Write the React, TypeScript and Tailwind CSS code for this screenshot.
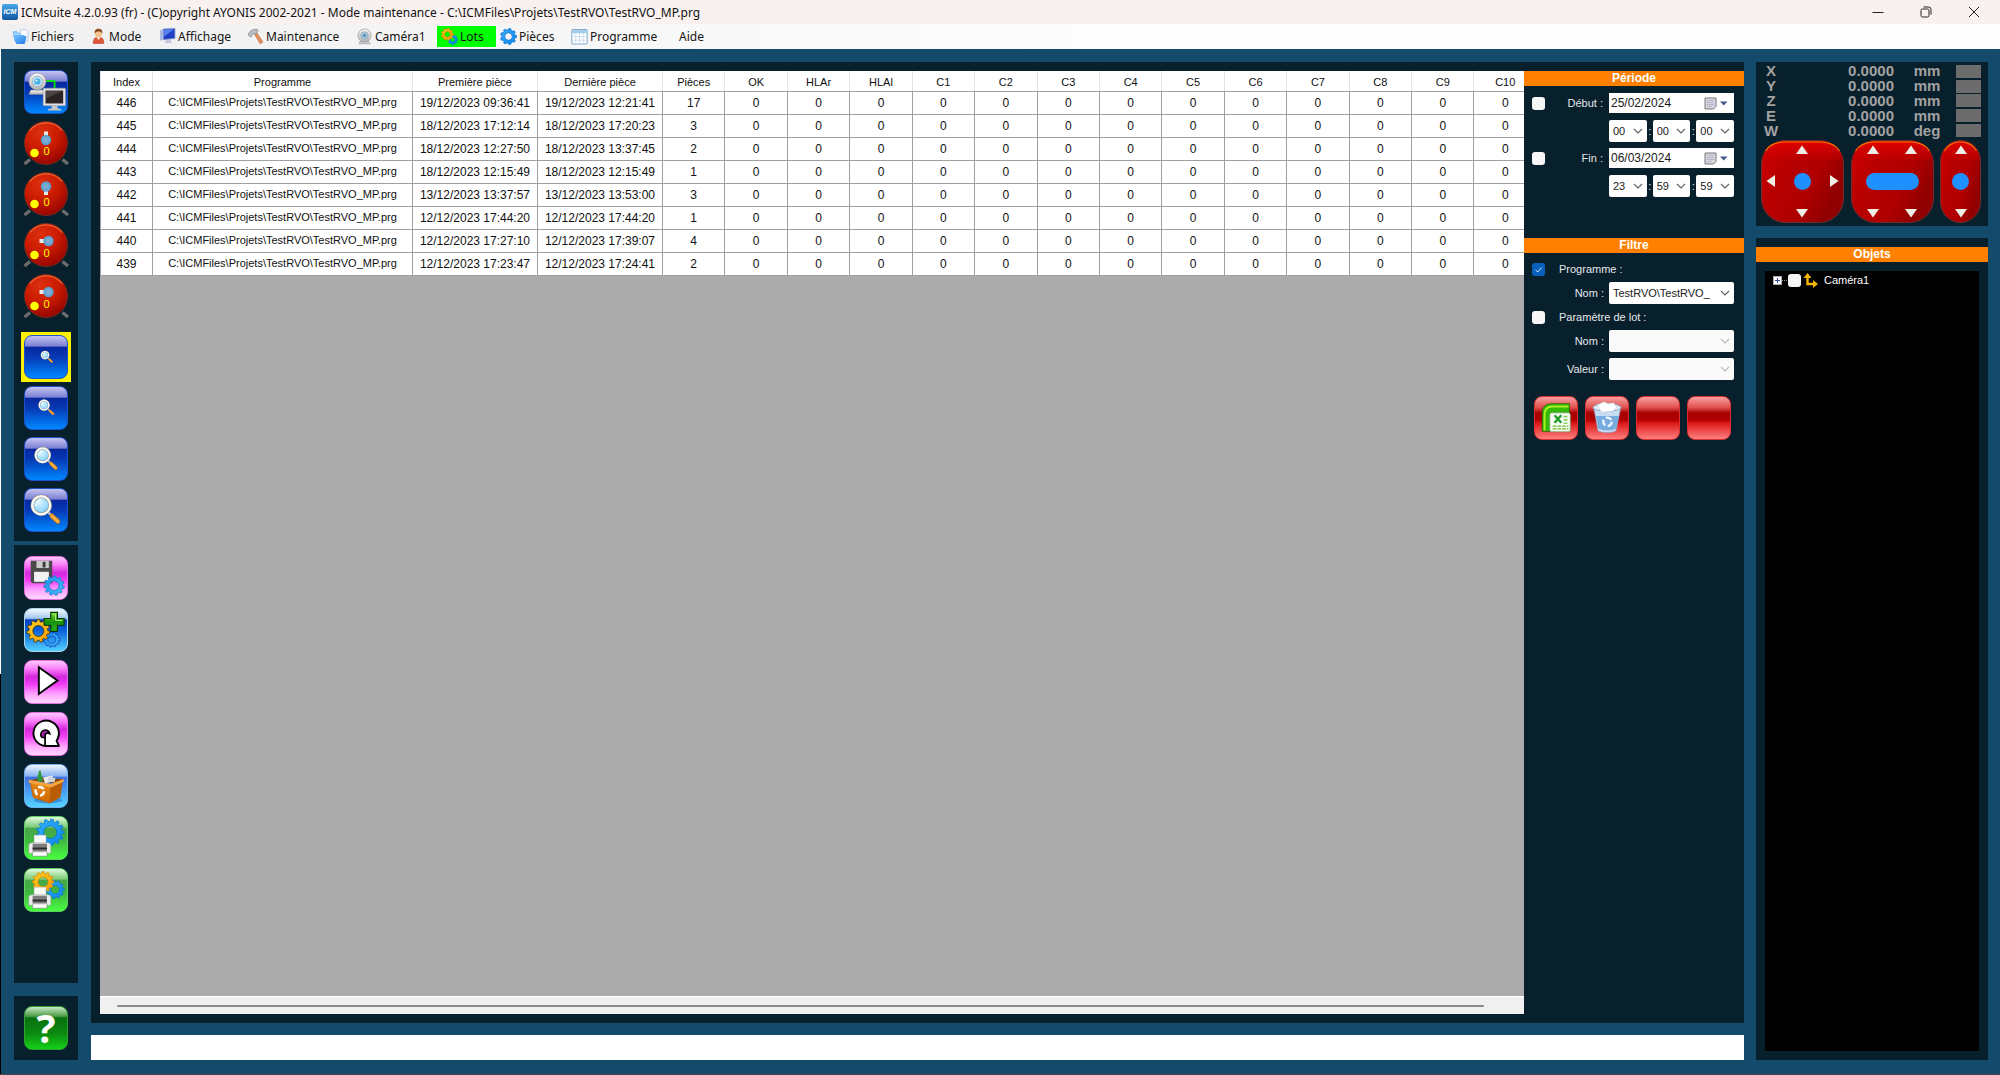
import React from "react";

const UI = "font-['Liberation_Sans',Arial,sans-serif]";

/* ---------- drawing helpers ---------- */

function gearPath(cx: number, cy: number, ro: number, ri: number, hole: number, n: number, squash = 1, rot = 0) {
  const pts: string[] = [];
  const step = (Math.PI * 2) / n;
  const at = (r: number, a: number) =>
    `${(cx + r * Math.cos(a)).toFixed(2)} ${(cy + r * squash * Math.sin(a)).toFixed(2)}`;
  for (let i = 0; i < n; i++) {
    const a = i * step + rot;
    pts.push(at(ri, a - step * 0.3), at(ro, a - step * 0.2), at(ro, a + step * 0.2), at(ri, a + step * 0.3));
  }
  const h = hole * squash;
  return `M${pts.join("L")}ZM${cx - hole} ${cy}a${hole} ${h} 0 1 0 ${hole * 2} 0a${hole} ${h} 0 1 0 ${-hole * 2} 0Z`;
}

function Gear(p: { cx: number; cy: number; r: number; color: "blue" | "gold" | "sky"; n?: number; squash?: number; rot?: number; outline?: string }) {
  const fills = { blue: "url(#gBlue)", gold: "url(#gGold)", sky: "url(#gSky)" };
  const lines = { blue: "#0a6fd0", gold: "#d88400", sky: "#1d78c0" };
  return (
    <path
      d={gearPath(p.cx, p.cy, p.r, p.r * 0.82, p.r * 0.48, p.n ?? 11, p.squash ?? 1, p.rot ?? 0)}
      fill={fills[p.color]}
      fillRule="evenodd"
      stroke={p.outline ?? lines[p.color]}
      strokeWidth="0.8"
      strokeLinejoin="round"
    />
  );
}

function Defs() {
  return (
    <svg width="0" height="0" className="absolute" aria-hidden="true">
      <defs>
        <linearGradient id="gBlue" x1="0" y1="0" x2="1" y2="1"><stop offset="0" stopColor="#35b4ff" /><stop offset="1" stopColor="#0a86f0" /></linearGradient>
        <linearGradient id="gSky" x1="0" y1="0" x2="1" y2="1"><stop offset="0" stopColor="#1894f0" /><stop offset="1" stopColor="#48baf8" /></linearGradient>
        <linearGradient id="gGold" x1="0" y1="0" x2="1" y2="1"><stop offset="0" stopColor="#ffd428" /><stop offset="1" stopColor="#ff9c00" /></linearGradient>
        <radialGradient id="gKnob" cx="0.38" cy="0.25" r="0.85"><stop offset="0" stopColor="#dc3010" /><stop offset="0.45" stopColor="#cc1c00" /><stop offset="1" stopColor="#8a0000" /></radialGradient>
        <radialGradient id="gLens" cx="0.4" cy="0.35" r="0.8"><stop offset="0" stopColor="#d8f4ff" /><stop offset="0.6" stopColor="#96d8fa" /><stop offset="1" stopColor="#62b8ee" /></radialGradient>
        <radialGradient id="gBall" cx="0.5" cy="0.5" r="0.5"><stop offset="0" stopColor="#88b4d8" /><stop offset="1" stopColor="#5a9aca" /></radialGradient>
        <linearGradient id="gPad" x1="0" y1="0" x2="1" y2="0.5"><stop offset="0" stopColor="#d00000" /><stop offset="0.35" stopColor="#b80000" /><stop offset="0.7" stopColor="#b00000" /><stop offset="1" stopColor="#900000" /></linearGradient>
        <linearGradient id="gPadTop" x1="0" y1="0" x2="0" y2="1"><stop offset="0" stopColor="#e40000" /><stop offset="1" stopColor="#c80000" stopOpacity="0.25" /></linearGradient>
        <linearGradient id="gGrey" x1="0" y1="0" x2="0" y2="1"><stop offset="0" stopColor="#f6f6f6" /><stop offset="1" stopColor="#b4b4b4" /></linearGradient>
        <linearGradient id="gPlus" x1="0" y1="0" x2="0" y2="1"><stop offset="0" stopColor="#7ee020" /><stop offset="0.5" stopColor="#169010" /><stop offset="1" stopColor="#2ab418" /></linearGradient>
        <linearGradient id="gBox" x1="0" y1="0" x2="0" y2="1"><stop offset="0" stopColor="#e88a18" /><stop offset="1" stopColor="#cf6800" /></linearGradient>
        <linearGradient id="gFolder" x1="0" y1="0" x2="1" y2="1"><stop offset="0" stopColor="#7cc4ff" /><stop offset="1" stopColor="#1f7be8" /></linearGradient>
      </defs>
    </svg>
  );
}

/* ---------- menu icons (16 px) ---------- */

const small = { width: 17, height: 17, viewBox: "0 0 16 16", "aria-hidden": true } as const;

const FolderIcon = () => (
  <svg {...small}>
    <path d="M1 3.500h4l1 1.500h5v8H3z" fill="#9ad2ff" stroke="#58a8ec" strokeWidth="0.6" />
    <path d="M8 1.500h5l2 2v9H8z" fill="#f6faff" stroke="#9dbbdc" strokeWidth="0.6" />
    <path d="M0.800 6.500h9.500l3.400 1.500-1.800 7H4z" fill="url(#gFolder)" />
  </svg>
);
const UserIcon = () => (
  <svg {...small}>
    <path d="M3 14.500c0-4 1.500-6 5-6s5 2 5 6z" fill="#e2573a" stroke="#b03a20" strokeWidth="0.5" />
    <path d="M6 8.500l2 3 2-3z" fill="#fbe6c8" />
    <circle cx="8" cy="5" r="3.400" fill="#f3c48e" />
    <path d="M4.400 5.200C4 2 5.800.8 8 .8s4 1.200 3.600 4.400C10.800 3.800 9 3.400 8 3.400s-2.800.4-3.600 1.800z" fill="#8a4a20" />
  </svg>
);
const MonitorIcon = () => (
  <svg {...small}>
    <path d="M4 1l11-.5v9.300L4 11z" fill="#1c3fc4" stroke="#8494c8" strokeWidth="0.8" />
    <path d="M4.500 1.500l9.500-.4L5 8z" fill="#5a80f0" />
    <path d="M1 2l2.500-.8v10L1 12z" fill="#a8b4e0" />
    <path d="M7 11h4l1 3H5z" fill="#c2c8dc" />
  </svg>
);
const HammerIcon = () => (
  <svg {...small}>
    <path d="M6.500 5l2-1.500L15 13l-2.500 2z" fill="#e0905a" stroke="#b06030" strokeWidth="0.5" />
    <path d="M1 6.500C2 3 5 .8 9.500 1.200L10.500 3 7.800 6 6 5 3.600 8.800z" fill="#b9bcc2" stroke="#7c8088" strokeWidth="0.6" />
  </svg>
);
const WebcamIcon = () => (
  <svg {...small}>
    <path d="M4 12h8l1.500 3h-11z" fill="#c4c8cc" stroke="#999" strokeWidth="0.4" />
    <circle cx="8" cy="7" r="6.200" fill="url(#gGrey)" stroke="#9a9fa6" strokeWidth="0.7" />
    <circle cx="8" cy="7" r="3.500" fill="#a8c8dc" stroke="#8aa0b0" strokeWidth="0.6" />
    <circle cx="8" cy="7" r="1.500" fill="#4f8fb8" />
  </svg>
);
const LotsIcon = () => (
  <svg {...small}>
    <Gear cx={11} cy={11} r={4.600} color="blue" n={8} />
    <Gear cx={6} cy={6} r={5.600} color="gold" n={9} />
  </svg>
);
const PieceIcon = () => (
  <svg {...small}><Gear cx={8} cy={8} r={7.500} color="blue" n={9} /></svg>
);
const GridIcon = () => (
  <svg {...small}>
    <rect x="0.800" y="1.500" width="14.400" height="13.500" rx="1" fill="#fff" stroke="#86aacb" />
    <rect x="1.300" y="2" width="13.400" height="3" fill="#a4cdec" />
    <path d="M1 8h14M1 11.500h14M4.500 5v10M8 5v10M11.500 5v10" stroke="#c3dcf0" strokeWidth="0.8" />
  </svg>
);

/* ---------- toolbar icons (44 px) ---------- */

const big = { width: "100%", height: "100%", viewBox: "0 0 44 44", "aria-hidden": true } as const;

const CameraScreen = () => (
  <svg {...big}>
    <path d="M22 10.500h9V20" fill="none" stroke="#00e800" strokeWidth="1.800" />
    <path d="M6 20h13l3 4.500H4z" fill="url(#gGrey)" stroke="#888" strokeWidth="0.500" />
    <circle cx="13" cy="11" r="9" fill="url(#gGrey)" stroke="#8c9096" strokeWidth="0.600" />
    <circle cx="13" cy="11" r="5.400" fill="#cfe6f4" stroke="#8fb0c4" />
    <circle cx="13" cy="11" r="3.400" fill="#4ab0e8" />
    <circle cx="12" cy="10" r="1.200" fill="#d8f4ff" />
    <rect x="19" y="18" width="23.500" height="18.500" rx="1" fill="#e2e2e2" stroke="#909090" strokeWidth="0.500" />
    <rect x="21.500" y="20.500" width="18.500" height="13.500" fill="#2c2424" />
    <path d="M21.500 20.500H40L21.500 29z" fill="#6a6464" opacity="0.500" />
    <path d="M28 36.500h6v2.500l4 1v1.500H24V40l4-1z" fill="#c8c8c8" />
  </svg>
);

function Knob({ dir }: { dir: "up" | "down" | "left" }) {
  const ball = { up: [22, 19], down: [22, 14.5], left: [24.5, 18] }[dir];
  return (
    <button aria-label={`Éclairage ${dir}`} className="h-11 w-11">
      <svg {...big} className="overflow-visible">
        <path d="M6 38.500L.5 43M38.500 38.500L44 43" stroke="#6c6c6c" strokeWidth="3.400" />
        <circle cx="22" cy="22" r="21.500" fill="url(#gKnob)" stroke="#7c3020" strokeWidth="0.800" />
        <path d="M6 9.500A20.500 20.500 0 0 1 38 9.500" fill="none" stroke="#f06030" strokeWidth="1.200" />
        <circle cx="10.500" cy="32" r="4.300" fill="#ffff00" />
        {dir === "up" && <rect x="20" y="10.500" width="4" height="5" fill="#e8e8e8" />}
        {dir === "down" && <rect x="20" y="18.500" width="4" height="4.500" fill="#e8e8e8" />}
        {dir === "left" && <rect x="15.500" y="16" width="5" height="4" fill="#e8e8e8" />}
        <circle cx={ball[0]} cy={ball[1]} r="5.200" fill="url(#gBall)" />
        <text x="22.500" y="34" textAnchor="middle" fontSize="11" fill="#ffff00" fontFamily="Liberation Sans, sans-serif">0</text>
      </svg>
    </button>
  );
}

const Magnifier = ({ s, cx, cy }: { s: number; cx: number; cy: number }) => (
  <svg {...big}>
    <g transform={`translate(${cx} ${cy}) scale(${s})`}>
      <path d="M7.500 7.500l2.800 2.800" stroke="#c0c4c8" strokeWidth="2.600" />
      <path d="M11 11l6 5.600" stroke="#c06a10" strokeWidth="5" strokeLinecap="round" />
      <path d="M11 11l6 5.600" stroke="#ffb040" strokeWidth="3.400" strokeLinecap="round" />
      <circle r="9.200" fill="url(#gLens)" stroke="#86847c" strokeWidth="3.600" />
      <circle r="9.200" fill="none" stroke="#fbfaf4" strokeWidth="2.600" />
      <path d="M-5 1A5.500 5.500 0 0 1 0-5.500" stroke="#fff" strokeWidth="1.500" fill="none" opacity="0.800" />
    </g>
  </svg>
);

const SaveGear = () => (
  <svg {...big}>
    <path d="M6 4h22.500v23.500H8L6 25.500z" fill="#4a4a4a" />
    <path d="M12 4h13v7.500H12z" fill="#c9c9c9" /><path d="M18.500 5h3v6h-3z" fill="#3c3c3c" />
    <path d="M9.500 15.500h15.500v10.500H9.500z" fill="#f2f2f2" />
    <Gear cx={30.500} cy={30} r={10.800} color="sky" squash={0.950} rot={0.200} />
  </svg>
);
const AddGear = () => (
  <svg {...big}>
    <Gear cx={28} cy={32} r={8.800} color="sky" squash={0.900} outline="#1038c0" />
    <Gear cx={14} cy={23} r={12} color="gold" rot={0.150} outline="#3a2a00" />
    <path d="M27 3.500h7v6.500h7v7h-7v6.500h-7V17h-7v-7h7z" fill="url(#gPlus)" stroke="#043804" strokeWidth="1.200" />
    <path d="M29 5.500h3v6.500h7" fill="none" stroke="#b8f890" strokeWidth="0.900" />
  </svg>
);
const Play = () => (
  <svg {...big}><path d="M14.500 6.500l19.500 14-19.500 14z" fill="#fff" stroke="#000" strokeWidth="2" /></svg>
);
const Loop = () => (
  <svg {...big}>
    <path d="M21 34.500a13.300 13.300 0 1 1 12-5.500l2.500 5.500z" fill="#fff" stroke="#000" strokeWidth="2" strokeLinejoin="round" />
    <path d="M21 34V22.500" stroke="#000" strokeWidth="1.800" />
    <path d="M17.500 25.500a4.800 4.800 0 1 1 8.500-3.800c-1.800-1-4-.5-5 1.300v3z" fill="#9c20a4" stroke="#000" strokeWidth="1.600" />
  </svg>
);
const RecycleBox = () => (
  <svg {...big}>
    <ellipse cx="24" cy="37" rx="15" ry="3" fill="#1c5ab0" opacity="0.450" />
    <path d="M5 16l13-3 22 2-8 4z" fill="#8a4400" />
    <path d="M13 17c0-5 1-6 1.500-11h2c0 4 2 6 2 11z" fill="#2f9a3c" />
    <path d="M19 13l9-2 3 6-10 2z" fill="#f0f0f0" /><path d="M25 12l7 2-1 4-8-1z" fill="#cfd4d8" />
    <path d="M5 16l22 5-1 19L8.500 34z" fill="url(#gBox)" stroke="#a85400" strokeWidth="0.500" />
    <path d="M27 21l13-6-3 19-11 6z" fill="#b85c00" />
    <path d="M4 15.500l23 4.500 13.500-5.500v3L27 23.500 4 18.500z" fill="#f6a440" />
    <circle cx="15.500" cy="27.500" r="4.400" fill="none" stroke="#fff" strokeWidth="2.600" strokeDasharray="6.400 2.800" />
  </svg>
);
const Printer = () => (
  <g>
    <path d="M9.500 19h12.500v12H9.500z" fill="#fafafa" stroke="#b0b0b0" strokeWidth="0.500" />
    <path d="M4 30c0-2 1.500-3 4-3h15.500c2.500 0 3.500 1 3.500 3v8H4z" fill="#ececec" stroke="#999" strokeWidth="0.500" />
    <path d="M8 28h15v8H8z" fill="#7c7c7c" /><path d="M8 32h15v2H8z" fill="#2c2c2c" />
    <path d="M8 36.500h15V41H8z" fill="#fff" stroke="#777" strokeWidth="0.500" />
  </g>
);
const PrintGear = () => (
  <svg {...big}><Gear cx={26.500} cy={16} r={14.500} color="blue" n={13} squash={0.950} /><Printer /></svg>
);
const PrintGears = () => (
  <svg {...big}>
    <Gear cx={31.500} cy={21.500} r={9.500} color="blue" n={11} />
    <Gear cx={19} cy={13.500} r={11.200} color="gold" n={12} squash={0.950} />
    <Printer />
  </svg>
);
const ExcelExport = () => (
  <svg {...big}>
    <path d="M7.500 36V17c0-7 4-10 10-10H36v13L20 36z" fill="#35b808" stroke="#186000" strokeWidth="0.700" />
    <path d="M10 35V19c0-6 3-9 8-9h17" fill="none" stroke="#a8f020" strokeWidth="2" />
    <rect x="15.500" y="16.500" width="21.500" height="20" rx="2" fill="#f8fbf4" stroke="#6ca060" strokeWidth="0.800" />
    <path d="M20.500 19l7 8M27.500 19l-7 8" stroke="#1c9c24" strokeWidth="2.400" />
    <path d="M30 20.500h5M30 24h5M30 27.500h5M18.500 30.500h16.500M18.500 33.500h16.500" stroke="#8cd060" strokeWidth="1.800" strokeDasharray="4 1" />
  </svg>
);
const TrashDelete = () => (
  <svg {...big}>
    <path d="M8 11l4.500 24c2 3 17 3 19 0l5-24z" fill="#c6dcf0" stroke="#7ea2c8" strokeWidth="0.600" />
    <path d="M10.500 20h24L31.500 33c-3 2.500-15.500 2.500-18.500 0z" fill="#5c9cd8" opacity="0.750" />
    <ellipse cx="22" cy="11" rx="14.500" ry="4" fill="#e4edf6" stroke="#8aa8cc" />
    <path d="M12 8l7-3 4 2 6-1 3 5-4 4-12 1z" fill="#fff" stroke="#b8c4d0" strokeWidth="0.500" />
    <circle cx="22.500" cy="26" r="4.400" fill="none" stroke="#eef6ff" strokeWidth="2.500" strokeDasharray="6.400 2.800" />
  </svg>
);

/* ---------- controls ---------- */

const skins = {
  blue: "border-[#1e50c8] bg-[linear-gradient(180deg,#c4c4f2_0%,#7c80d4_24%,#0828a0_27%,#0638b4_50%,#0088ff_100%)]",
  pink: "border-[#e070e0] bg-[linear-gradient(180deg,#ffc8ff_0%,#f878f8_20%,#d428dc_38%,#f03cf4_55%,#ffa0ff_78%,#ffd8ff_100%)]",
  cyan: "border-[#b0d8f0] bg-[linear-gradient(180deg,#f4faff_0%,#a4c8f0_22%,#0840c0_26%,#0a60d8_50%,#50d0ff_100%)]",
  sky: "border-[#70b0f0] bg-[linear-gradient(180deg,#f0f6ff_0%,#88b4f0_26%,#3c70e0_30%,#4aa0f4_65%,#54d4ff_100%)]",
  green: "border-[#60d060] bg-[linear-gradient(180deg,#e0fadc_0%,#7ccc78_24%,#48a848_27%,#40b440_55%,#48ff40_100%)]",
  help: "border-[#30a030] bg-[linear-gradient(180deg,#c8e8c4_0%,#4c9c48_22%,#087010_26%,#0c8c10_65%,#14d018_100%)]",
  red: "border-[#d83030] bg-[linear-gradient(180deg,#f8a0a0_0%,#e05050_25%,#a80000_38%,#b00000_55%,#dc1818_62%,#ff8080_100%)]",
};

function Glossy({ skin, label, children }: { skin: keyof typeof skins; label: string; children?: React.ReactNode }) {
  return (
    <button aria-label={label} title={label} className={`flex h-11 w-11 shrink-0 items-center justify-center rounded-lg border ${skins[skin]}`}>
      {children}
    </button>
  );
}

function Combo({ label, value, options, disabled, id }: { label?: string; value: string; options?: string[]; disabled?: boolean; id?: string }) {
  return (
    <div className="relative min-w-0 flex-1">
      <select
        id={id}
        aria-label={label}
        defaultValue={value}
        disabled={disabled}
        className="block h-[22px] w-full appearance-none rounded-xs bg-white pr-4 pl-1 text-[11px] text-[#202020] disabled:bg-[#fafafa] disabled:opacity-100"
      >
        {(options ?? [value]).map((o) => <option key={o}>{o}</option>)}
      </select>
      <svg viewBox="0 0 10 6" className={`pointer-events-none absolute top-2 right-1 h-1.5 w-2.5 ${disabled ? "text-[#b8b8b8]" : "text-[#606060]"}`} aria-hidden="true">
        <path d="M1 1l4 4 4-4" fill="none" stroke="currentColor" strokeWidth="1.100" />
      </svg>
    </div>
  );
}

function Tick({ id, checked, label }: { id: string; checked?: boolean; label?: string }) {
  return (
    <span className="relative block h-[13px] w-[13px] shrink-0">
      <input id={id} type="checkbox" aria-label={label} defaultChecked={checked}
        className="peer block h-[13px] w-[13px] appearance-none rounded-[3px] bg-[#f6f6f6] checked:bg-[#0860bc]" />
      <svg viewBox="0 0 13 13" className="pointer-events-none absolute inset-0 hidden peer-checked:block" aria-hidden="true">
        <path d="M3.500 6.800l2.200 2.200 4-4.500" fill="none" stroke="#d8e8f8" strokeWidth="1" />
      </svg>
    </span>
  );
}

function DateBlock({ id, label, date, time }: { id: string; label: string; date: string; time: string[] }) {
  return (
    <div className="flex flex-col gap-[7px]">
      <div className="flex items-center">
        <Tick id={`${id}-on`} label={`Activer ${label}`} />
        <label htmlFor={id} className="w-[64px] pr-1.5 text-right">{label} :</label>
        <div className="flex h-5 flex-1 items-center bg-white pr-1.5">
          <input id={id} defaultValue={date} className="w-0 flex-1 bg-transparent pl-0.5 text-xs text-[#181818] outline-none" />
          <button aria-label={`Calendrier ${label}`} className="flex items-center gap-0.5">
            <svg width="13" height="13" viewBox="0 0 13 13" aria-hidden="true">
              <path d="M1 1h11v8.500L9.500 12H1z" fill="#d6d6e2" stroke="#7c7474" />
              <path d="M3 3.500h7M3 5.500h7M3 7.500h7M3 9.500h5" stroke="#a0a0b8" strokeWidth="0.800" strokeDasharray="1.500 0.600" />
            </svg>
            <svg width="9" height="5" viewBox="0 0 9 5" aria-hidden="true"><path d="M1 .5h7.500L4.700 4.500z" fill="#44588c" /></svg>
          </button>
        </div>
      </div>
      <div className="ml-[77px] flex items-center">
        {time.map((t, i) => (
          <React.Fragment key={i}>
            {i > 0 && <span className="w-1.5 text-center">:</span>}
            <Combo label={`${label} ${["heures", "minutes", "secondes"][i]}`} value={t} />
          </React.Fragment>
        ))}
      </div>
    </div>
  );
}

function Banner({ children }: { children: React.ReactNode }) {
  return <h2 className="bg-[#ff8000] text-center text-xs leading-[15px] font-bold text-white">{children}</h2>;
}

/* ---------- data ---------- */

const menus: [string, React.ReactNode, string][] = [
  ["Fichiers", <FolderIcon />, "w-[78px]"],
  ["Mode", <UserIcon />, "w-[69px]"],
  ["Affichage", <MonitorIcon />, "w-[88px]"],
  ["Maintenance", <HammerIcon />, "w-[109px]"],
  ["Caméra1", <WebcamIcon />, "w-[85px]"],
  ["Lots", <LotsIcon />, "w-[59px] bg-[#00ff00]"],
  ["Pièces", <PieceIcon />, "w-[71px]"],
  ["Programme", <GridIcon />, "w-[108px]"],
  ["Aide", null, "w-[40px]"],
];

const counters = ["OK", "HLAr", "HLAl", "C1", "C2", "C3", "C4", "C5", "C6", "C7", "C8", "C9", "C10"];
const program = "C:\\ICMFiles\\Projets\\TestRVO\\TestRVO_MP.prg";
const lots = [
  [446, "19/12/2023 09:36:41", "19/12/2023 12:21:41", 17],
  [445, "18/12/2023 17:12:14", "18/12/2023 17:20:23", 3],
  [444, "18/12/2023 12:27:50", "18/12/2023 13:37:45", 2],
  [443, "18/12/2023 12:15:49", "18/12/2023 12:15:49", 1],
  [442, "13/12/2023 13:37:57", "13/12/2023 13:53:00", 3],
  [441, "12/12/2023 17:44:20", "12/12/2023 17:44:20", 1],
  [440, "12/12/2023 17:27:10", "12/12/2023 17:39:07", 4],
  [439, "12/12/2023 17:23:47", "12/12/2023 17:24:41", 2],
];
const axes = [["X", "mm"], ["Y", "mm"], ["Z", "mm"], ["E", "mm"], ["W", "deg"]];

/* ---------- regions ---------- */

function TitleBar() {
  return (
    <header className="flex h-6 shrink-0 items-center bg-[#f9f1f0] pl-0.5 text-[#111]">
      <span className="flex h-4 w-4 items-center justify-center rounded-xs bg-linear-to-b from-[#4aa8e8] to-[#1058a0] text-[7px] font-bold text-white italic">ICM</span>
      <h1 className="ml-[3px] flex-1 truncate pt-0.5 font-['Noto_Sans','Open_Sans',sans-serif] text-xs">
        ICMsuite 4.2.0.93 (fr) - (C)opyright AYONIS 2002-2021 - Mode maintenance - C:\ICMFiles\Projets\TestRVO\TestRVO_MP.prg
      </h1>
      <div className="flex items-center pr-0.5">
        <button aria-label="Réduire" className="flex w-12 justify-center"><svg width="12" height="12" viewBox="0 0 12 12"><path d="M.5 6.500h11" stroke="#222" /></svg></button>
        <button aria-label="Restaurer" className="flex w-12 justify-center"><svg width="12" height="12" viewBox="0 0 12 12" fill="none" stroke="#222"><rect x="1" y="3" width="8" height="8" rx="1.500" /><path d="M3.500 1h5A2.500 2.500 0 0 1 11 3.500v5" /></svg></button>
        <button aria-label="Fermer" className="flex w-12 justify-center"><svg width="12" height="12" viewBox="0 0 12 12"><path d="M1 1l10 10M11 1L1 11" stroke="#222" /></svg></button>
      </div>
    </header>
  );
}

function MenuBar() {
  return (
    <nav className="flex h-[25px] shrink-0 items-center bg-linear-to-r from-[#f0f0f0] to-[#fdfdfd] to-55% pl-2">
      {menus.map(([name, icon, cls]) => (
        <button key={name} className={`flex h-[21px] shrink-0 items-center gap-0.5 pl-1 font-['Noto_Sans','Open_Sans',sans-serif] text-xs text-[#151515] ${cls}`}>
          {icon}
          {name}
        </button>
      ))}
    </nav>
  );
}

function ToolColumn() {
  return (
    <aside className="flex w-16 shrink-0 flex-col">
      <div className="flex flex-col items-center gap-[7px] bg-[#08202c] pt-2 pb-[9px]">
        <Glossy skin="blue" label="Vue caméra"><CameraScreen /></Glossy>
        <Knob dir="up" />
        <Knob dir="down" />
        <Knob dir="left" />
        <Knob dir="left" />
        <div className="mt-[7px] -mb-[3px] flex bg-[#fff200] p-[3px]"><Glossy skin="blue" label="Zoom 1"><Magnifier s={0.420} cx={21} cy={20} /></Glossy></div>
        <Glossy skin="blue" label="Zoom 2"><Magnifier s={0.550} cx={20} cy={19} /></Glossy>
        <Glossy skin="blue" label="Zoom 3"><Magnifier s={0.800} cx={18.500} cy={18} /></Glossy>
        <Glossy skin="blue" label="Zoom 4"><Magnifier s={1.020} cx={17} cy={17} /></Glossy>
      </div>
      <div className="mt-1 flex flex-1 flex-col items-center gap-2 bg-[#08202c] pt-[11px]">
        <Glossy skin="pink" label="Enregistrer"><SaveGear /></Glossy>
        <Glossy skin="cyan" label="Ajouter un lot"><AddGear /></Glossy>
        <Glossy skin="pink" label="Démarrer"><Play /></Glossy>
        <Glossy skin="pink" label="Boucle"><Loop /></Glossy>
        <Glossy skin="sky" label="Recycler"><RecycleBox /></Glossy>
        <Glossy skin="green" label="Imprimer la pièce"><PrintGear /></Glossy>
        <Glossy skin="green" label="Imprimer le lot"><PrintGears /></Glossy>
      </div>
      <div className="mt-[13px] flex h-16 items-center justify-center bg-[#08202c]">
        <Glossy skin="help" label="Aide">
          <span className="font-['Open_Sans','Noto_Sans',sans-serif] text-[40px] leading-none font-bold text-white">?</span>
        </Glossy>
      </div>
    </aside>
  );
}

function LotTable() {
  return (
    <div className="flex min-w-0 flex-1 flex-col bg-[#ababab]">
      <div className="flex-1 overflow-hidden">
        <table className="w-[1437px] table-fixed border-collapse bg-white text-center text-[#101010]">
          <colgroup>
            <col className="w-[52px]" /><col className="w-[260px]" /><col className="w-[125px]" /><col className="w-[125px]" />
          </colgroup>
          <thead>
            <tr className="h-5 text-[11px] [&>th]:border-x [&>th]:border-x-[#e4e4e4] [&>th]:border-b [&>th]:border-b-[#a0a0a0] [&>th]:px-0 [&>th]:pt-0.5 [&>th]:font-normal">
              <th>Index</th><th>Programme</th><th>Première pièce</th><th>Dernière pièce</th><th>Pièces</th>
              {counters.map((c) => <th key={c}>{c}</th>)}
            </tr>
          </thead>
          <tbody>
            {lots.map(([index, first, last, count]) => (
              <tr key={index} className="h-[23px] text-xs whitespace-nowrap [&>td]:border [&>td]:border-[#a0a0a0] [&>td]:p-0">
                <td>{index}</td><td className="text-[11px]">{program}</td><td>{first}</td><td>{last}</td><td>{count}</td>
                {counters.map((c) => <td key={c}>0</td>)}
              </tr>
            ))}
          </tbody>
        </table>
      </div>
      <div className="flex h-[18px] items-center border-t border-white bg-[#f0f0f0] pr-10 pl-[17px]">
        <div className="h-0.5 flex-1 rounded-full bg-[#8a8a8a]" />
      </div>
    </div>
  );
}

function FilterPanel() {
  return (
    <section className="w-[220px] shrink-0 text-[11px] leading-[15px] text-[#e4e8ea]">
      <Banner>Période</Banner>
      <div className="flex flex-col gap-1.5 pt-[7px] pr-2.5 pl-2">
        <DateBlock id="debut" label="Début" date="25/02/2024" time={["00", "00", "00"]} />
        <DateBlock id="fin" label="Fin" date="06/03/2024" time={["23", "59", "59"]} />
      </div>
      <div className="mt-[41px]"><Banner>Filtre</Banner></div>
      <div className="pt-[9px] pr-2.5 pl-2">
        <div className="flex items-center">
          <Tick id="prog-on" checked /><label htmlFor="prog-on" className="pl-3.5">Programme :</label>
        </div>
        <div className="mt-[5px] flex items-center">
          <label htmlFor="prog-nom" className="w-[77px] pr-[5px] text-right">Nom :</label>
          <Combo id="prog-nom" value={"TestRVO\\TestRVO_"} />
        </div>
        <div className="mt-1.5 flex items-center">
          <Tick id="param-on" /><label htmlFor="param-on" className="pl-3.5">Paramètre de lot :</label>
        </div>
        <div className="mt-[5px] flex items-center">
          <label htmlFor="param-nom" className="w-[77px] pr-[5px] text-right">Nom :</label>
          <Combo id="param-nom" value="" disabled />
        </div>
        <div className="mt-1.5 flex items-center">
          <label htmlFor="param-val" className="w-[77px] pr-[5px] text-right">Valeur :</label>
          <Combo id="param-val" value="" disabled />
        </div>
        <div className="mt-4 flex gap-[7px] pl-0.5">
          <Glossy skin="red" label="Exporter vers Excel"><ExcelExport /></Glossy>
          <Glossy skin="red" label="Supprimer"><TrashDelete /></Glossy>
          <Glossy skin="red" label="Commande 3" />
          <Glossy skin="red" label="Commande 4" />
        </div>
      </div>
    </section>
  );
}

const tri = {
  up: "M-6 4L0-4.500 6 4z", down: "M-6-4L0 4.500 6-4z", left: "M4-6L-4.500 0 4 6z", right: "M-4-6L4.500 0-4 6z",
};
function Pad({ w, knob, arrows, label }: { w: number; knob: number; arrows: [keyof typeof tri, number, number][]; label: string }) {
  const r = Math.min(w / 2, 24);
  return (
    <button aria-label={label}>
      <svg width={w} height="83" viewBox={`0 0 ${w} 83`} className="block" aria-hidden="true">
        <rect x="0.500" y="0.500" width={w - 1} height="82" rx={r} fill="url(#gPad)" stroke="#6a3030" />
        <path d={`M1 20Q3 2 ${r} 1H${w - r}Q${w - 3} 2 ${w - 1} 20z`} fill="url(#gPadTop)" />
        <path d={`M4.500 11Q9 3 ${r - 2} 2H${w - r + 2}Q${w - 9} 3 ${w - 4.5} 11`} fill="none" stroke="#f07800" strokeWidth="1.200" />
        <rect x={(w - knob) / 2} y="33" width={knob} height="17" rx="8.500" fill="#1e90ff" />
        {arrows.map(([d, x, y], i) => (
          <path key={i} d={tri[d]} transform={`translate(${x} ${y})`} fill="#eeeee6" />
        ))}
      </svg>
    </button>
  );
}

function AxisPanel() {
  return (
    <section className="bg-[#08202c] pt-0.5 pr-[7px] pb-[3px] pl-[5px]">
      <div className="grid h-[74px] auto-rows-fr text-[15px] leading-[14px] font-bold text-[#a2a2a2]">
        {axes.map(([axis, unit]) => (
          <div key={axis} className="flex items-center">
            <span className="w-5 text-center">{axis}</span>
            <span className="flex-1 text-right">0.0000</span>
            <span className="w-[62px] pl-1 text-center">{unit}</span>
            <span className="h-[13px] w-[25px] bg-[#6c6c6c]" />
          </div>
        ))}
      </div>
      <div className="mt-0.5 flex justify-between">
        <Pad label="Axes X et Y" w={83} knob={17} arrows={[["up", 41, 10], ["down", 41, 73], ["left", 10, 41], ["right", 73, 41]]} />
        <Pad label="Axes Z et E" w={83} knob={53} arrows={[["up", 22, 10], ["up", 60, 10], ["down", 22, 73], ["down", 60, 73]]} />
        <Pad label="Axe W" w={41} knob={17} arrows={[["up", 21, 10], ["down", 21, 73]]} />
      </div>
    </section>
  );
}

function ObjectPanel() {
  return (
    <section className="mt-3 flex flex-1 flex-col bg-[#08202c] py-[9px]">
      <Banner>Objets</Banner>
      <div className="mx-[9px] mt-[9px] flex-1 bg-black">
        <div className="flex items-center pt-0.5 pl-2 text-xs text-white">
          <button aria-label="Développer" className="flex">
            <svg width="15" height="9" viewBox="0 0 15 9" aria-hidden="true">
              <rect x="0.500" y="0.500" width="8" height="8" fill="#fff" stroke="#aaa" />
              <path d="M2 4.500h5M4.500 2v5" stroke="#3048a0" /><path d="M9 4.500h6" stroke="#999" strokeDasharray="1 1" />
            </svg>
          </button>
          <Tick id="camera1" />
          <svg width="15" height="15" viewBox="0 0 15 15" className="ml-0.5" aria-hidden="true">
            <path d="M4.500 3v8H12" fill="none" stroke="#f4b400" strokeWidth="2.400" />
            <path d="M0.500 5L4.500 0l4 5zM10 7l5 4-5 4z" fill="#f4b400" />
          </svg>
          <label htmlFor="camera1" className="pl-1.5 text-[11px]">Caméra1</label>
        </div>
      </div>
    </section>
  );
}

export default function App() {
  return (
    <div className={`flex h-screen min-h-[960px] flex-col bg-[#144b6a] ${UI}`}>
      <Defs />
      <TitleBar />
      <MenuBar />
      <main className="flex min-h-0 flex-1 border-b border-[#4a4248]">
        <div className="w-px bg-linear-to-b from-white from-61% to-black to-61%" />
        <div className="flex min-w-0 flex-1 pt-[13px] pr-3 pb-3.5 pl-[13px]">
          <ToolColumn />
          <div className="mr-3 ml-[13px] flex min-w-0 flex-1 flex-col">
            <div className="flex min-h-0 flex-1 bg-[#08202c] py-[9px] pl-[9px]">
              <LotTable />
              <FilterPanel />
            </div>
            <input aria-label="Message" className="mt-3 block h-[25px] w-full bg-white px-2 text-xs outline-none" />
          </div>
          <aside className="flex w-[232px] shrink-0 flex-col">
            <AxisPanel />
            <ObjectPanel />
          </aside>
        </div>
      </main>
    </div>
  );
}
